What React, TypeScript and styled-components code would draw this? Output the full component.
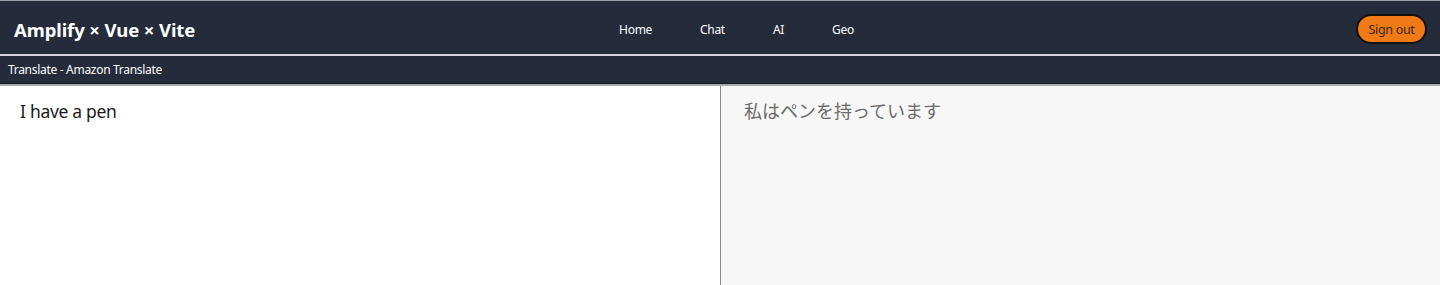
import React from "react";
import styled, { createGlobalStyle } from "styled-components";

const Global = createGlobalStyle`
  html, body { margin: 0; padding: 0; background: #ffffff; }
  body { font-family: "Noto Sans", "Noto Sans CJK JP", sans-serif; }
  * { box-sizing: border-box; }
`;

const Page = styled.div`
  border-top: 1px solid #9aa0a8;
`;

const Header = styled.header`
  height: 55px;
  background: #242b3b;
  display: grid;
  grid-template-columns: 1fr auto 1fr;
  align-items: center;
  padding: 3px 13px 0 14px;
  border-bottom: 2px solid #d3d6db;
`;

const Title = styled.div`
  color: #ffffff;
  font-weight: 700;
  font-size: 18.5px;
  letter-spacing: -0.1px;
`;

const Nav = styled.nav`
  display: flex;
  gap: 48px;
  margin-left: 32px;
`;

const NavLink = styled.a`
  color: #ffffff;
  font-size: 12px;
  letter-spacing: -0.3px;
  text-decoration: none;
`;

const Right = styled.div`
  display: flex;
  justify-content: flex-end;
`;

const SignOut = styled.button`
  height: 30px;
  width: 71px;
  border-radius: 15px;
  border: 2px solid #111111;
  background: #ef7a16;
  color: #3a2a1a;
  font-family: inherit;
  font-size: 12.5px;
  letter-spacing: -0.3px;
  padding: 0;
`;

const SubHeader = styled.div`
  height: 28px;
  background: #242b3b;
  color: #ffffff;
  font-size: 12px;
  letter-spacing: -0.3px;
  display: flex;
  align-items: center;
  padding: 0 8px;
  border-bottom: 1px solid #151a25;
`;

const Panels = styled.div`
  display: grid;
  grid-template-columns: 720px 1fr;
  border-top: 2px solid #a9abae;
  height: 210px;
`;

const Panel = styled.div<{ $output?: boolean }>`
  padding: 13px 20px;
  font-size: ${(p) => (p.$output ? "18px" : "17.5px")};
  line-height: 24px;
  background: ${(p) => (p.$output ? "#f7f7f7" : "#ffffff")};
  color: ${(p) => (p.$output ? "#6b6b6b" : "#1a1a1a")};
  letter-spacing: ${(p) => (p.$output ? "0" : "-0.3px")};
  border-left: ${(p) => (p.$output ? "1px solid #8a8a8a" : "none")};
  padding-left: ${(p) => (p.$output ? "23px" : "20px")};
  font-family: "Noto Sans", "Noto Sans CJK JP", sans-serif;
`;

export default function App() {
  return (
    <>
      <Global />
      <Page>
        <Header>
          <Title>Amplify × Vue × Vite</Title>
          <Nav>
            <NavLink href="#">Home</NavLink>
            <NavLink href="#">Chat</NavLink>
            <NavLink href="#">AI</NavLink>
            <NavLink href="#">Geo</NavLink>
          </Nav>
          <Right>
            <SignOut>Sign out</SignOut>
          </Right>
        </Header>
        <SubHeader>Translate - Amazon Translate</SubHeader>
        <Panels>
          <Panel>I have a pen</Panel>
          <Panel $output>私はペンを持っています</Panel>
        </Panels>
      </Page>
    </>
  );
}
